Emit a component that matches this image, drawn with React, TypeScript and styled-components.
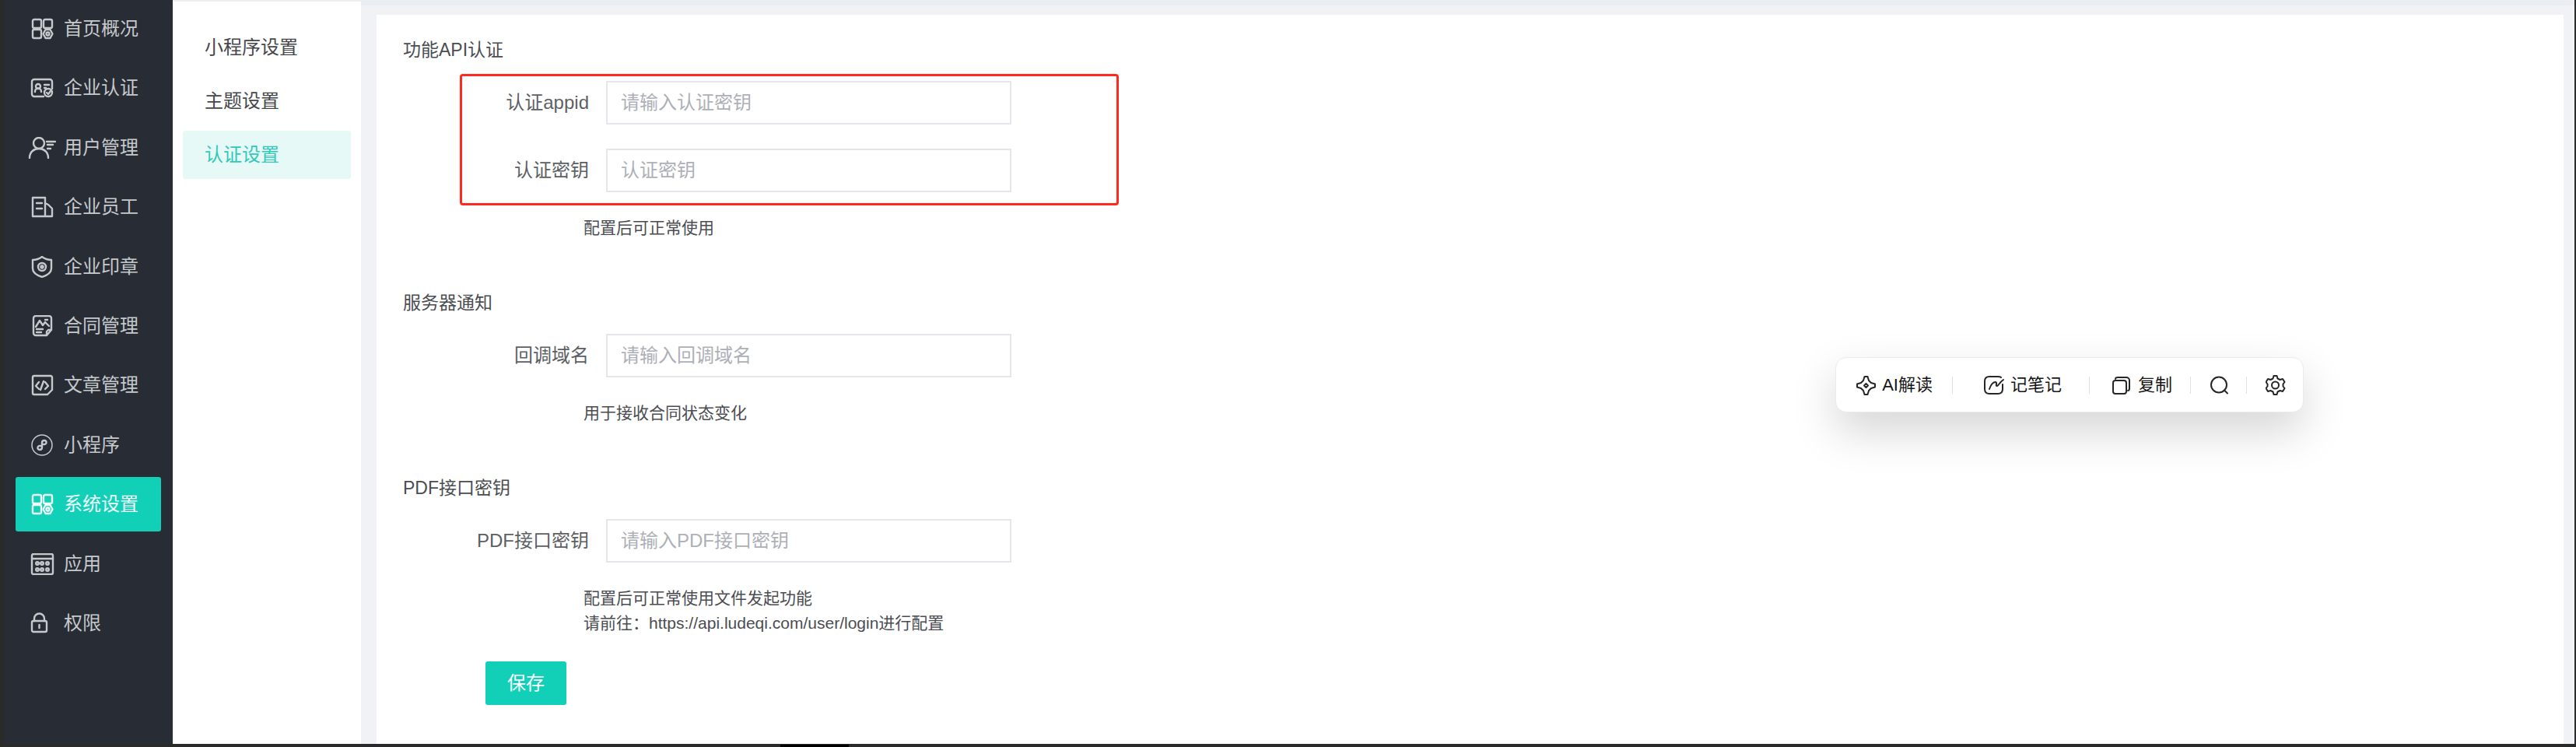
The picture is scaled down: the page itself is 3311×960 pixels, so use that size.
import React from 'react';
import styled, { createGlobalStyle } from 'styled-components';

const GlobalStyle = createGlobalStyle`
  *, *::before, *::after { box-sizing: border-box; }
  body {
    margin: 0;
    background: #f0f2f5;
    font-family: "Liberation Sans", "Noto Sans CJK SC", sans-serif;
    font-size: 24px;
    line-height: 32px;
    color: #4b4d52;
  }
  ul { list-style: none; margin: 0; padding: 0; }
  a { color: inherit; text-decoration: none; }
  button, input { font: inherit; }
`;

const Page = styled.div`
  position: relative;
  display: flex;
  min-height: 100vh;
  border: 0 solid #2a2a2b;
  border-width: 0 2px 4px 6px;
`;

const BottomNotch = styled.div`
  position: absolute;
  left: 997px;
  bottom: -4px;
  width: 88px;
  height: 3px;
  background: #000;
`;

const Sidebar = styled.nav`
  display: flex;
  flex: none;
  width: 216px;
  padding: 2px 15px 120px 14px;
  background: #282c35;
`;

const MenuList = styled.ul`
  flex: 1;
  display: flex;
  flex-direction: column;
  justify-content: space-between;
`;

const MenuLink = styled.a<{ $active?: boolean }>`
  display: flex;
  align-items: center;
  gap: 10px;
  height: 70px;
  padding-left: 16px;
  border-radius: 3px;
  white-space: nowrap;
  color: ${p => (p.$active ? '#effffc' : '#c6c9cc')};
  background: ${p => (p.$active ? '#12d0b8' : 'transparent')};
`;

const MenuIcon = styled.svg`
  flex: none;
  width: 36px;
  height: 28px;
  fill: none;
  stroke: currentColor;
  stroke-width: 2.4;
  stroke-linecap: round;
  stroke-linejoin: round;
`;

const SubNav = styled.nav`
  flex: none;
  width: 242px;
  padding: 28px 13px;
  background: #fff;
  border-top: 2px solid #f0f0f1;
`;

const SubList = styled.ul`
  display: flex;
  flex-direction: column;
  gap: 7px;
`;

const SubLink = styled.a<{ $active?: boolean }>`
  display: flex;
  align-items: center;
  height: 62px;
  padding-left: 28px;
  border-radius: 3px;
  color: ${p => (p.$active ? '#31c9b7' : '#45474b')};
  background: ${p => (p.$active ? '#e6f9f7' : 'transparent')};
`;

const Content = styled.main`
  flex: 1;
  display: flex;
  padding: 12px 14px 0 20px;
  border-top: 7px solid #eaeef2;
  background: #f0f2f5;
`;

const Card = styled.form`
  flex: 1;
  padding: 29px 34px 50px;
  background: #fff;
`;

const Section = styled.section`
  & + & { margin-top: 64px; }
`;

const Title = styled.h2`
  margin: 0;
  font-size: 23px;
  font-weight: 400;
`;

const FieldGroup = styled.div<{ $marked?: boolean }>`
  display: flex;
  flex-direction: column;
  gap: 31px;
  width: 847px;
  max-width: 100%;
  margin: 15px 0 13px 73px;
  padding: 6px 0 14px;
  border: 3px solid ${p => (p.$marked ? '#ff2a1d' : 'transparent')};
  border-radius: 4px;
`;

const Field = styled.div`
  display: flex;
  align-items: center;
  gap: 22px;
`;

const Label = styled.label`
  width: 163px;
  text-align: right;
  white-space: nowrap;
  color: #5d5f64;
`;

const TextInput = styled.input`
  width: 521px;
  height: 56px;
  padding: 0 17px;
  border: 2px solid #e3e6ea;
  border-radius: 0;
  background: #fff;
  color: #5d5f64;
  &::placeholder { color: #adb0b7; opacity: 1; }
`;

const Hint = styled.p`
  margin: 0 0 0 232px;
  font-size: 21px;
`;

const SaveButton = styled.button`
  width: 104px;
  height: 56px;
  margin: 33px 0 0 106px;
  border: 0;
  border-radius: 3px;
  background: #12d0b8;
  color: #fff;
`;

const Toolbar = styled.div`
  position: absolute;
  top: 459px;
  right: 348px;
  display: flex;
  align-items: center;
  height: 71px;
  border: 1px solid #ebebeb;
  border-radius: 14px;
  background: #fff;
  box-shadow: 0 24px 56px rgba(0, 0, 0, 0.17);
`;

const ToolButton = styled.button<{ $before: number; $after: number }>`
  display: flex;
  align-items: center;
  gap: 8px;
  padding: 0 ${p => p.$after}px 0 ${p => p.$before}px;
  border: 0;
  background: none;
  font-size: 22px;
  color: #161616;
  white-space: nowrap;
`;

const ToolIcon = styled.svg`
  flex: none;
  width: 26px;
  height: 26px;
  fill: none;
  stroke: #262626;
  stroke-width: 2;
  stroke-linecap: round;
  stroke-linejoin: round;
`;

const Divider = styled.span`
  width: 1px;
  height: 22px;
  background: #dfdfe6;
`;

const blocks = (
  <>
    <rect x="6" y="2" width="11" height="11" rx="2" />
    <rect x="20" y="2" width="11" height="11" rx="2" />
    <rect x="6" y="15" width="11" height="11" rx="2" />
    <path d="M22.500 15h6l3 5.500-3 5.500h-6l-3-5.500z" />
    <circle cx="25.500" cy="20.500" r="2" />
  </>
);

const menu: { label: string; icon: React.ReactNode; active?: boolean }[] = [
  { label: '首页概况', icon: blocks },
  {
    label: '企业认证',
    icon: (
      <>
        <path d="M31 15V6a3 3 0 0 0-3-3H8a3 3 0 0 0-3 3v16a3 3 0 0 0 3 3h12" />
        <circle cx="13" cy="12" r="3" />
        <path d="M9 19c0-6 8-6 8 0M21 10h6M21 14h2" />
        <circle cx="26" cy="20" r="5" />
        <path d="M24 20l2 2 3-4" />
      </>
    ),
  },
  {
    label: '用户管理',
    icon: (
      <>
        <circle cx="14" cy="8" r="7" />
        <path d="M2 27c0-16 24-16 24 0" />
        <path d="M24 6h11M25 10h7M25 15h4" />
      </>
    ),
  },
  {
    label: '企业员工',
    icon: (
      <path d="M6 2h16v24H6zM22 9l4 2 5 5v10h-9M11 9h7M11 16h7" />
    ),
  },
  {
    label: '企业印章',
    icon: (
      <>
        <path d="M18 1c4 3 8 4 12 4v11c0 5-6 9-12 11C12 25 6 21 6 16V5c4 0 8-1 12-4z" />
        <circle cx="18" cy="14" r="5" />
        <circle cx="18" cy="14" r="1.500" />
      </>
    ),
  },
  {
    label: '合同管理',
    icon: (
      <>
        <path d="M30 19V4a3 3 0 0 0-3-3H10a3 3 0 0 0-3 3v19a3 3 0 0 0 3 3h14zM30 19h-4l-2 2v5" />
        <path d="M10 15l5-8 4 6 3-4 5 5M22 6h3M11 18h8M11 22h6" />
      </>
    ),
  },
  {
    label: '文章管理',
    icon: (
      <path d="M31 20V4a2 2 0 0 0-2-2H8a2 2 0 0 0-2 2v20a2 2 0 0 0 2 2h17zM14 10l-4 5 4 4M22 10l4 5-4 4M20 9l-4 11" />
    ),
  },
  {
    label: '小程序',
    icon: (
      <>
        <circle cx="18" cy="14" r="13" strokeWidth="1.500" />
        <path d="M20 13c4 1 5-5 1-5-2 0-3 1-3 3v6c0 2-1 3-3 3-4 0-3-6 1-5" />
      </>
    ),
  },
  { label: '系统设置', icon: blocks, active: true },
  {
    label: '应用',
    icon: (
      <>
        <rect x="5" y="1" width="27" height="26" rx="2" />
        <path d="M5 7h27" />
        {[12, 18, 25].map(x =>
          [13, 21].map(y => <circle key={`${x}-${y}`} cx={x} cy={y} r="1.800" />),
        )}
      </>
    ),
  },
  {
    label: '权限',
    icon: (
      <>
        <rect x="5" y="11" width="19" height="14" rx="2" />
        <path d="M8 11V8a6 6 0 0 1 13 0v3" />
        <path d="M14.500 16v4" />
      </>
    ),
  },
];

const subMenu = [
  { label: '小程序设置' },
  { label: '主题设置' },
  { label: '认证设置', active: true },
];

const sections = [
  {
    title: '功能API认证',
    marked: true,
    fields: [
      { id: 'appid', label: '认证appid', placeholder: '请输入认证密钥' },
      { id: 'secret', label: '认证密钥', placeholder: '认证密钥' },
    ],
    hints: ['配置后可正常使用'],
  },
  {
    title: '服务器通知',
    fields: [{ id: 'callback', label: '回调域名', placeholder: '请输入回调域名' }],
    hints: ['用于接收合同状态变化'],
  },
  {
    title: 'PDF接口密钥',
    fields: [{ id: 'pdf', label: 'PDF接口密钥', placeholder: '请输入PDF接口密钥' }],
    hints: ['配置后可正常使用文件发起功能', '请前往：https://api.ludeqi.com/user/login进行配置'],
  },
];

export default function App() {
  return (
    <Page lang="zh-CN">
      <GlobalStyle />
      <Sidebar>
        <MenuList>
          {menu.map(item => (
            <li key={item.label}>
              <MenuLink href="#" $active={item.active}>
                <MenuIcon viewBox="0 0 36 28" aria-hidden="true">{item.icon}</MenuIcon>
                {item.label}
              </MenuLink>
            </li>
          ))}
        </MenuList>
      </Sidebar>
      <SubNav>
        <SubList>
          {subMenu.map(item => (
            <li key={item.label}>
              <SubLink href="#" $active={item.active}>{item.label}</SubLink>
            </li>
          ))}
        </SubList>
      </SubNav>
      <Content>
        <Card onSubmit={e => e.preventDefault()}>
          {sections.map(section => (
            <Section key={section.title}>
              <Title>{section.title}</Title>
              <FieldGroup $marked={section.marked}>
                {section.fields.map(field => (
                  <Field key={field.id}>
                    <Label htmlFor={field.id}>{field.label}</Label>
                    <TextInput id={field.id} type="text" placeholder={field.placeholder} />
                  </Field>
                ))}
              </FieldGroup>
              {section.hints.map(hint => (
                <Hint key={hint}>{hint}</Hint>
              ))}
            </Section>
          ))}
          <SaveButton type="submit">保存</SaveButton>
        </Card>
      </Content>
      <Toolbar role="toolbar">
        <ToolButton type="button" $before={25} $after={25}>
          <ToolIcon viewBox="0 0 26 26" aria-hidden="true">
            <path d="M11.500 2h4l1.500 5 3 3 5 1.500v4L20 17l-3 3-1.500 5h-4L10 20l-3-3-5-1.500v-4L7 10l3-3z" />
            <path d="M13.500 11l2.500 2.500-2.500 2.500-2.500-2.500z" />
          </ToolIcon>
          AI解读
        </ToolButton>
        <Divider />
        <ToolButton type="button" $before={40} $after={35}>
          <ToolIcon viewBox="0 0 26 26" aria-hidden="true">
            <path d="M22 3c-1-1-2-1-4-1H7C3 2 1 4 1 8v10c0 4 2 6 6 6h11c4 0 6-2 6-6v-6" />
            <path d="M7 18c2-6 5-9 8-9 3 1-1 5 2 5 2 0 2-4 8-8" />
          </ToolIcon>
          记笔记
        </ToolButton>
        <Divider />
        <ToolButton type="button" $before={28} $after={23}>
          <ToolIcon viewBox="0 0 26 26" aria-hidden="true">
            <rect x="2" y="7" width="17" height="17" rx="3" />
            <path d="M5 5c0-1 1-2 3-2h11a4 4 0 0 1 4 4v10c0 2-1 3-2 3" />
          </ToolIcon>
          复制
        </ToolButton>
        <Divider />
        <ToolButton type="button" aria-label="搜索" $before={24} $after={21}>
          <ToolIcon viewBox="0 0 26 26" aria-hidden="true">
            <circle cx="12" cy="12.500" r="10" />
            <path d="M19 19.500l4 4" />
          </ToolIcon>
        </ToolButton>
        <Divider />
        <ToolButton type="button" aria-label="设置" $before={24} $after={22}>
          <ToolIcon viewBox="0 0 26 26" aria-hidden="true">
            <path d="M10.500 1h4l1 3.500 3 1.500 3.500-1 2.500 4-2 2.500v3l2 2.500-2.500 4-3.500-1-3 1.500-1 3.500h-4l-1-3.500-3-1.500L3 21l-2.500-4 2-2.500v-3L.5 9 3 5l3.500 1 3-1.500z" />
            <circle cx="12.500" cy="13" r="4.500" />
          </ToolIcon>
        </ToolButton>
      </Toolbar>
      <BottomNotch />
    </Page>
  );
}
